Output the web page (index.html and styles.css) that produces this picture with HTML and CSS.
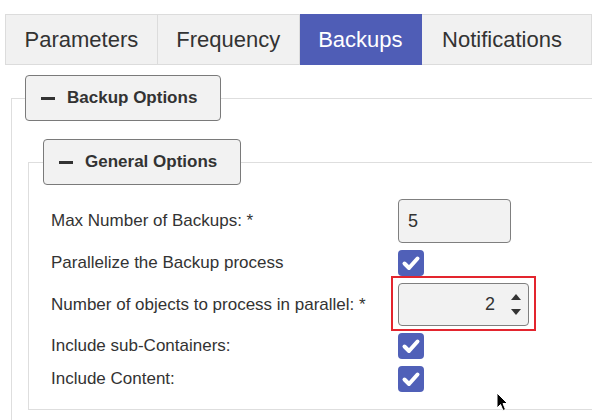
FILE: index.html
```html
<!DOCTYPE html>
<html>
<head>
<meta charset="utf-8">
<link rel="stylesheet" href="styles.css">
</head>
<body>
<div class="page">
  <div class="tabs">
    <div class="tab">Parameters</div>
    <div class="tab">Frequency</div>
    <div class="tab active">Backups</div>
    <div class="tab last">Notifications</div>
  </div>
  <fieldset class="fs outer">
    <legend class="lg lg-outer"><span class="toggle"><span class="minus"></span>Backup Options</span></legend>
    <fieldset class="fs inner">
      <legend class="lg lg-inner"><span class="toggle"><span class="minus"></span>General Options</span></legend>
      <div class="form">
        <div class="label">Max Number of Backups: *</div>
        <div class="ctrl"><div class="text-input">5</div></div>

        <div class="label">Parallelize the Backup process</div>
        <div class="ctrl"><span class="check"><svg viewBox="0 0 26 26" width="26" height="26"><path d="M6.5 13.5 L11 18 L19.5 8.5" fill="none" stroke="#fff" stroke-width="4" stroke-linecap="round" stroke-linejoin="round"/></svg></span></div>

        <div class="label">Number of objects to process in parallel: *</div>
        <div class="ctrl">
          <div class="num-wrap">
            <div class="num-input">
              <span class="num-val">2</span>
              <span class="spin">
                <svg viewBox="0 0 10 6" width="10" height="6"><path d="M0 6 L5 0 L10 6 Z" fill="#333"/></svg>
                <svg viewBox="0 0 10 6" width="10" height="6"><path d="M0 0 L5 6 L10 0 Z" fill="#333"/></svg>
              </span>
            </div>
            <div class="highlight"></div>
          </div>
        </div>

        <div class="label">Include sub-Containers:</div>
        <div class="ctrl"><span class="check"><svg viewBox="0 0 26 26" width="26" height="26"><path d="M6.5 13.5 L11 18 L19.5 8.5" fill="none" stroke="#fff" stroke-width="4" stroke-linecap="round" stroke-linejoin="round"/></svg></span></div>

        <div class="label">Include Content:</div>
        <div class="ctrl"><span class="check"><svg viewBox="0 0 26 26" width="26" height="26"><path d="M6.5 13.5 L11 18 L19.5 8.5" fill="none" stroke="#fff" stroke-width="4" stroke-linecap="round" stroke-linejoin="round"/></svg></span></div>
      </div>
    </fieldset>
  </fieldset>
  <svg class="cursor" viewBox="0 0 13 20" width="13" height="20"><path d="M1 1 L1 16 L4.5 12.5 L7 18.5 L9.5 17.5 L7 11.5 L11.5 11.5 Z" fill="#000" stroke="#fff" stroke-width="1"/></svg>
</div>
</body>
</html>
```

FILE: styles.css
```css
html, body {
  margin: 0;
  padding: 0;
  background: #fff;
}

body {
  font-family: "Liberation Sans", Arial, sans-serif;
  color: #333;
}

.page {
  position: relative;
  width: 587px;
  height: 406px;
  margin-left: 5px;
  padding-top: 14px;
  overflow: hidden;
}

.tabs {
  display: flex;
  height: 51px;
}

.tab {
  box-sizing: border-box;
  height: 51px;
  display: flex;
  align-items: center;
  padding: 0 18.5px;
  font-size: 22px;
  color: #333;
  background: #f1f1f1;
  border: 1px solid #dcdcdc;
  border-left: none;
  flex-shrink: 0;
}

.tab:first-child {
  border-left: 1px solid #dcdcdc;
}

.tab.active {
  background: #4f5db6;
  border-color: #4f5db6;
  color: #fff;
}

.tab.last {
  flex: 1;
  padding-left: 20px;
}

.fs {
  border: 1px solid #dedede;
  border-right: none;
  padding: 0;
  min-width: 0;
}

.outer {
  margin: 10px 0 0 6px;
  padding-bottom: 40px;
}

.inner {
  margin: 18px 0 0 16px;
}

.lg {
  padding: 0;
}

.lg-outer {
  margin-left: 13px;
}

.lg-inner {
  margin-left: 14px;
}

.toggle {
  box-sizing: border-box;
  display: flex;
  align-items: center;
  height: 46px;
  padding: 0 23px 0 15px;
  background: #f2f2f2;
  border: 1px solid #7a7a7a;
  border-radius: 4px;
  font-size: 17px;
  font-weight: bold;
  color: #333;
}

.minus {
  display: inline-block;
  width: 14px;
  height: 3px;
  background: #333;
  margin-right: 12px;
}

.form {
  display: grid;
  grid-template-columns: 347px auto;
  row-gap: 7px;
  align-items: center;
  padding: 14px 0 17px 22px;
}

.label {
  font-size: 17px;
  color: #333;
}

.ctrl {
  display: flex;
  align-items: center;
}

.text-input {
  box-sizing: border-box;
  width: 113px;
  height: 44px;
  padding-left: 9px;
  display: flex;
  align-items: center;
  background: #f2f2f2;
  border: 1px solid #7f7f7f;
  border-radius: 4px;
  font-size: 18px;
  color: #333;
}

.check {
  display: block;
  width: 26px;
  height: 26px;
  border-radius: 4px;
  background: #5060b8;
}

.check svg {
  display: block;
}

.num-wrap {
  position: relative;
}

.num-input {
  box-sizing: border-box;
  width: 131px;
  height: 43px;
  display: flex;
  align-items: center;
  justify-content: flex-end;
  padding-right: 7px;
  background: #f2f2f2;
  border: 1px solid #7f7f7f;
  border-radius: 4px;
  font-size: 18px;
  color: #333;
}

.num-val {
  margin-right: 16px;
}

.spin {
  display: flex;
  flex-direction: column;
  gap: 9px;
}

.spin svg {
  display: block;
}

.highlight {
  position: absolute;
  top: -7px;
  bottom: -5px;
  left: -7px;
  right: -7px;
  border: 2px solid #e3252e;
  box-sizing: border-box;
}

.cursor {
  position: absolute;
  left: 491px;
  top: 392px;
}
```
